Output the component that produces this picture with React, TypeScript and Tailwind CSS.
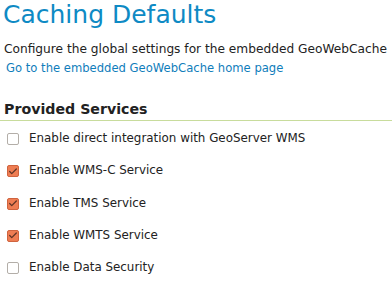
import { Check } from 'lucide-react';

interface Service {
  label: string;
  checked: boolean;
}

const SERVICES: Service[] = [
  { label: 'Enable direct integration with GeoServer WMS', checked: false },
  { label: 'Enable WMS-C Service', checked: true },
  { label: 'Enable TMS Service', checked: true },
  { label: 'Enable WMTS Service', checked: true },
  { label: 'Enable Data Security', checked: false },
];

function Box({ checked }: { checked: boolean }) {
  if (checked) {
    return (
      <span className="flex h-[12px] w-[12px] shrink-0 items-center justify-center rounded-[2px] border border-[#d0643f] bg-[#ee7d53]">
        <Check size={11} strokeWidth={3} className="text-[#5e3326]" />
      </span>
    );
  }
  return <span className="h-[12px] w-[12px] shrink-0 rounded-[2px] border border-[#b3aea8] bg-white" />;
}

export default function App() {
  return (
    <div className="h-[289px] w-[392px] overflow-hidden bg-white font-['DejaVu_Sans',sans-serif] text-[#222]">
      <h1 className="pl-[3px] pt-[1px] text-[25px] leading-[28px] text-[#0e8ac4]">Caching Defaults</h1>
      <p className="mt-[12px] pl-[4px] text-[12.2px] leading-[16px]">
        Configure the global settings for the embedded GeoWebCache
      </p>
      <a className="mt-[3px] block pl-[6px] text-[11.6px] leading-[16px] text-[#0f7dbb]">
        Go to the embedded GeoWebCache home page
      </a>

      <h2 className="mt-[24px] border-b border-[#c8dc9c] pb-[2px] pl-[4px] text-[14.2px] font-bold leading-[18px] text-[#222]">
        Provided Services
      </h2>
      <ul className="mt-[10px] flex flex-col gap-[16.3px] pl-[7px]">
        {SERVICES.map((s) => (
          <li key={s.label} className="flex h-[16px] items-center gap-[10px] text-[11.9px]">
            <Box checked={s.checked} />
            <span>{s.label}</span>
          </li>
        ))}
      </ul>
    </div>
  );
}
